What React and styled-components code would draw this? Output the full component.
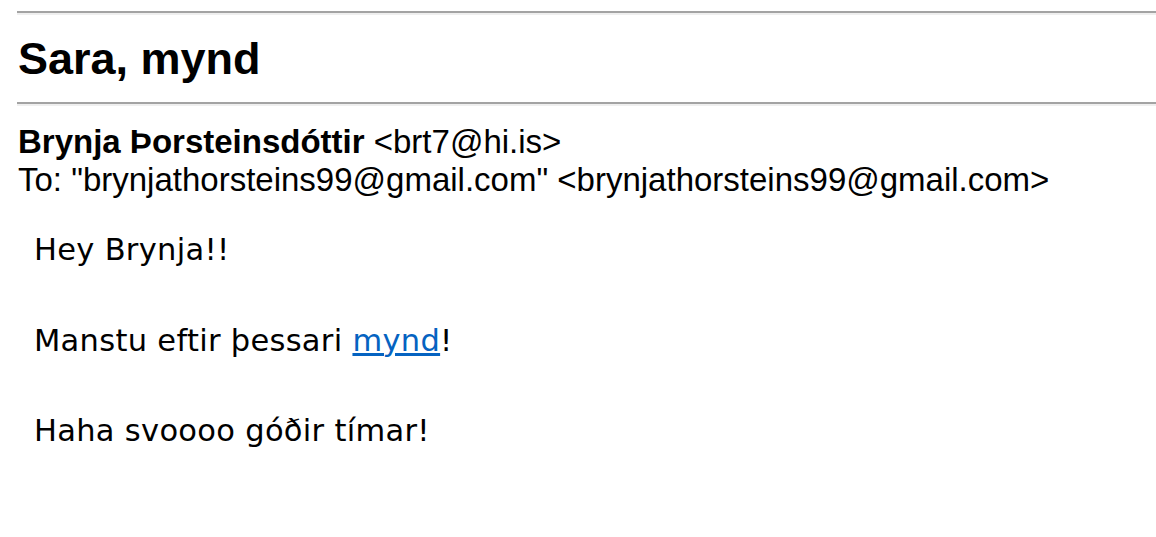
import React from "react";
import styled, { createGlobalStyle } from "styled-components";

const GlobalStyle = createGlobalStyle`
  html, body {
    margin: 0;
    padding: 0;
    background: #ffffff;
  }
`;

const Page = styled.div`
  padding: 11px 0 0 17px;
  font-family: "Liberation Sans", Arial, sans-serif;
  color: #000;
`;

const Rule = styled.div`
  height: 2px;
  background: #a3a3a3;
  border-bottom: 2px solid #efefef;
`;

const Subject = styled.h1`
  margin: 18px 0 17px 1px;
  font-size: 45px;
  line-height: 52px;
  font-weight: 700;
`;

const Header = styled.div`
  margin: 17px 0 0 1px;
  font-size: 33px;
  line-height: 38px;
`;

const Sender = styled.span`
  font-weight: 700;
`;

const Body = styled.div`
  padding: 28px 0 0 17px;
  font-family: "DejaVu Sans", sans-serif;
  font-size: 30.5px;
  letter-spacing: 0.3px;
  line-height: 45px;
`;

const Para = styled.p`
  margin: 0 0 45.5px;
`;

const Link = styled.a`
  color: #0563c1;
  text-decoration: underline;
`;

const App = () => {
  return (
    <>
      <GlobalStyle />
      <Page>
        <Rule />
        <Subject>Sara, mynd</Subject>
        <Rule />
        <Header>
          <div>
            <Sender>Brynja Þorsteinsdóttir</Sender> &lt;brt7@hi.is&gt;
          </div>
          <div>
            To: "brynjathorsteins99@gmail.com" &lt;brynjathorsteins99@gmail.com&gt;
          </div>
        </Header>
        <Body>
          <Para>Hey Brynja!!</Para>
          <Para>
            Manstu eftir þessari <Link href="#">mynd</Link>!
          </Para>
          <Para>Haha svoooo góðir tímar!</Para>
        </Body>
      </Page>
    </>
  );
};

export default App;
